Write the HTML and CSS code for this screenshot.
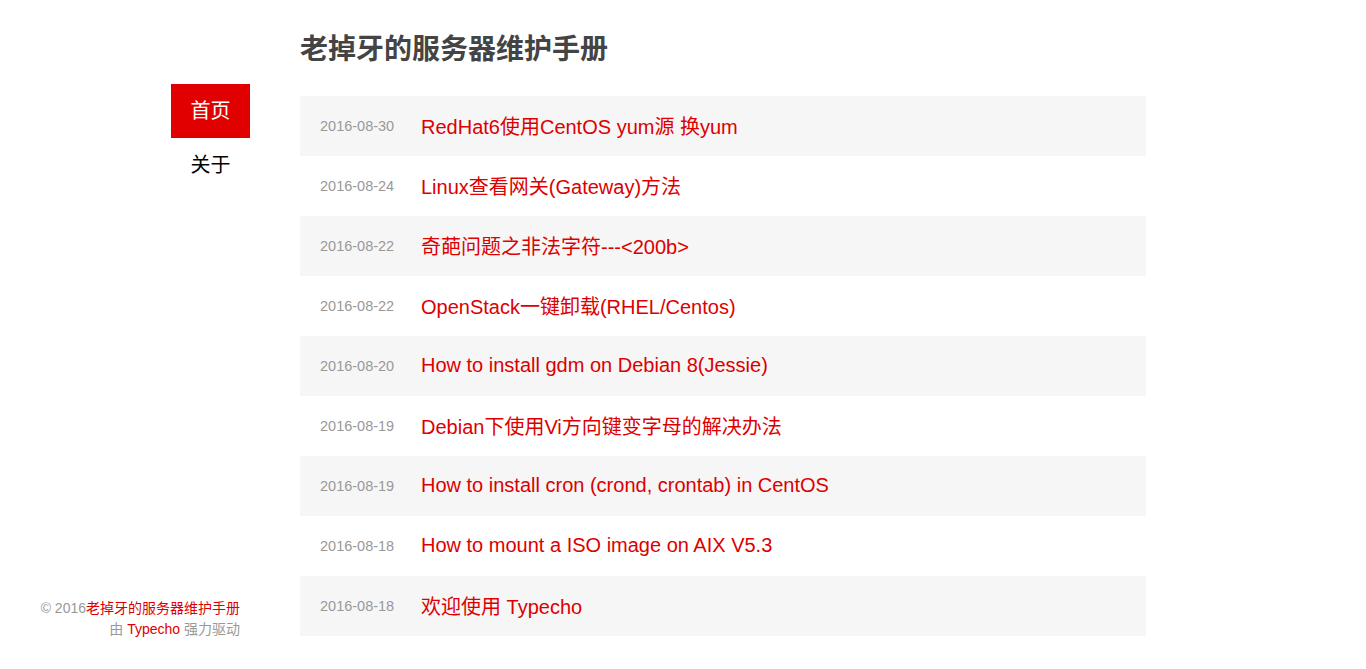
FILE: index.html
```html
<!DOCTYPE html>
<html lang="zh-CN">
<head>
    <meta charset="UTF-8">
    <meta name="viewport" content="width=device-width, initial-scale=1.0">
    <title>老掉牙的服务器维护手册</title>
    <link rel="stylesheet" href="styles.css">
</head>
<body>
    <div class="page">
        <aside class="sidebar">
            <nav class="nav">
                <a href="#" class="nav-item current">首页</a>
                <a href="#" class="nav-item">关于</a>
            </nav>
            <footer class="footer">
                <p>&copy; 2016<a href="#">老掉牙的服务器维护手册</a></p>
                <p>由 <a href="#">Typecho</a> 强力驱动</p>
            </footer>
        </aside>
        <main class="main">
            <h1 class="site-title">老掉牙的服务器维护手册</h1>
            <ul class="post-list">
                <li class="post"><span class="post-date">2016-08-30</span><a href="#" class="post-title">RedHat6使用CentOS yum源 换yum</a></li>
                <li class="post"><span class="post-date">2016-08-24</span><a href="#" class="post-title">Linux查看网关(Gateway)方法</a></li>
                <li class="post"><span class="post-date">2016-08-22</span><a href="#" class="post-title">奇葩问题之非法字符---&lt;200b&gt;</a></li>
                <li class="post"><span class="post-date">2016-08-22</span><a href="#" class="post-title">OpenStack一键卸载(RHEL/Centos)</a></li>
                <li class="post"><span class="post-date">2016-08-20</span><a href="#" class="post-title">How to install gdm on Debian 8(Jessie)</a></li>
                <li class="post"><span class="post-date">2016-08-19</span><a href="#" class="post-title">Debian下使用Vi方向键变字母的解决办法</a></li>
                <li class="post"><span class="post-date">2016-08-19</span><a href="#" class="post-title">How to install cron (crond, crontab) in CentOS</a></li>
                <li class="post"><span class="post-date">2016-08-18</span><a href="#" class="post-title">How to mount a ISO image on AIX V5.3</a></li>
                <li class="post"><span class="post-date">2016-08-18</span><a href="#" class="post-title">欢迎使用 Typecho</a></li>
            </ul>
        </main>
    </div>
</body>
</html>
```

FILE: styles.css
```css
html, body {
    margin: 0;
    padding: 0;
}
body {
    font-family: "Liberation Sans", Arial, "Noto Sans CJK SC", sans-serif;
    color: #333;
    background-color: #fff;
}
a {
    color: #d00;
    text-decoration: none;
}
.page {
    display: flex;
    min-height: 669px;
}
.sidebar {
    width: 250px;
    display: flex;
    flex-direction: column;
    justify-content: space-between;
    padding-top: 84px;
    padding-bottom: 29px;
    box-sizing: border-box;
}
.nav {
    display: flex;
    flex-direction: column;
    align-items: flex-end;
}
.nav-item {
    display: block;
    width: 79px;
    height: 54px;
    line-height: 54px;
    text-align: center;
    font-size: 20px;
    color: #000;
}
.nav-item.current {
    background-color: #e00000;
    color: #fff;
}
.footer {
    padding-right: 10px;
    text-align: right;
    font-size: 14px;
    color: #999;
}
.footer p {
    margin: 0;
    line-height: 21px;
}
.main {
    width: 846px;
    margin-left: 50px;
}
.site-title {
    margin: 0 0 28px;
    padding-top: 32px;
    font-size: 28px;
    line-height: 36px;
    font-weight: bold;
    color: #444;
}
.post-list {
    list-style: none;
    margin: 0;
    padding: 0;
}
.post {
    display: flex;
    align-items: center;
    height: 60px;
    padding-left: 20px;
}
.post:nth-child(odd) {
    background-color: #f6f6f6;
}
.post-date {
    width: 101px;
    font-size: 14.5px;
    color: #999;
}
.post-title {
    font-size: 20px;
    margin-top: -2px;
}
```
